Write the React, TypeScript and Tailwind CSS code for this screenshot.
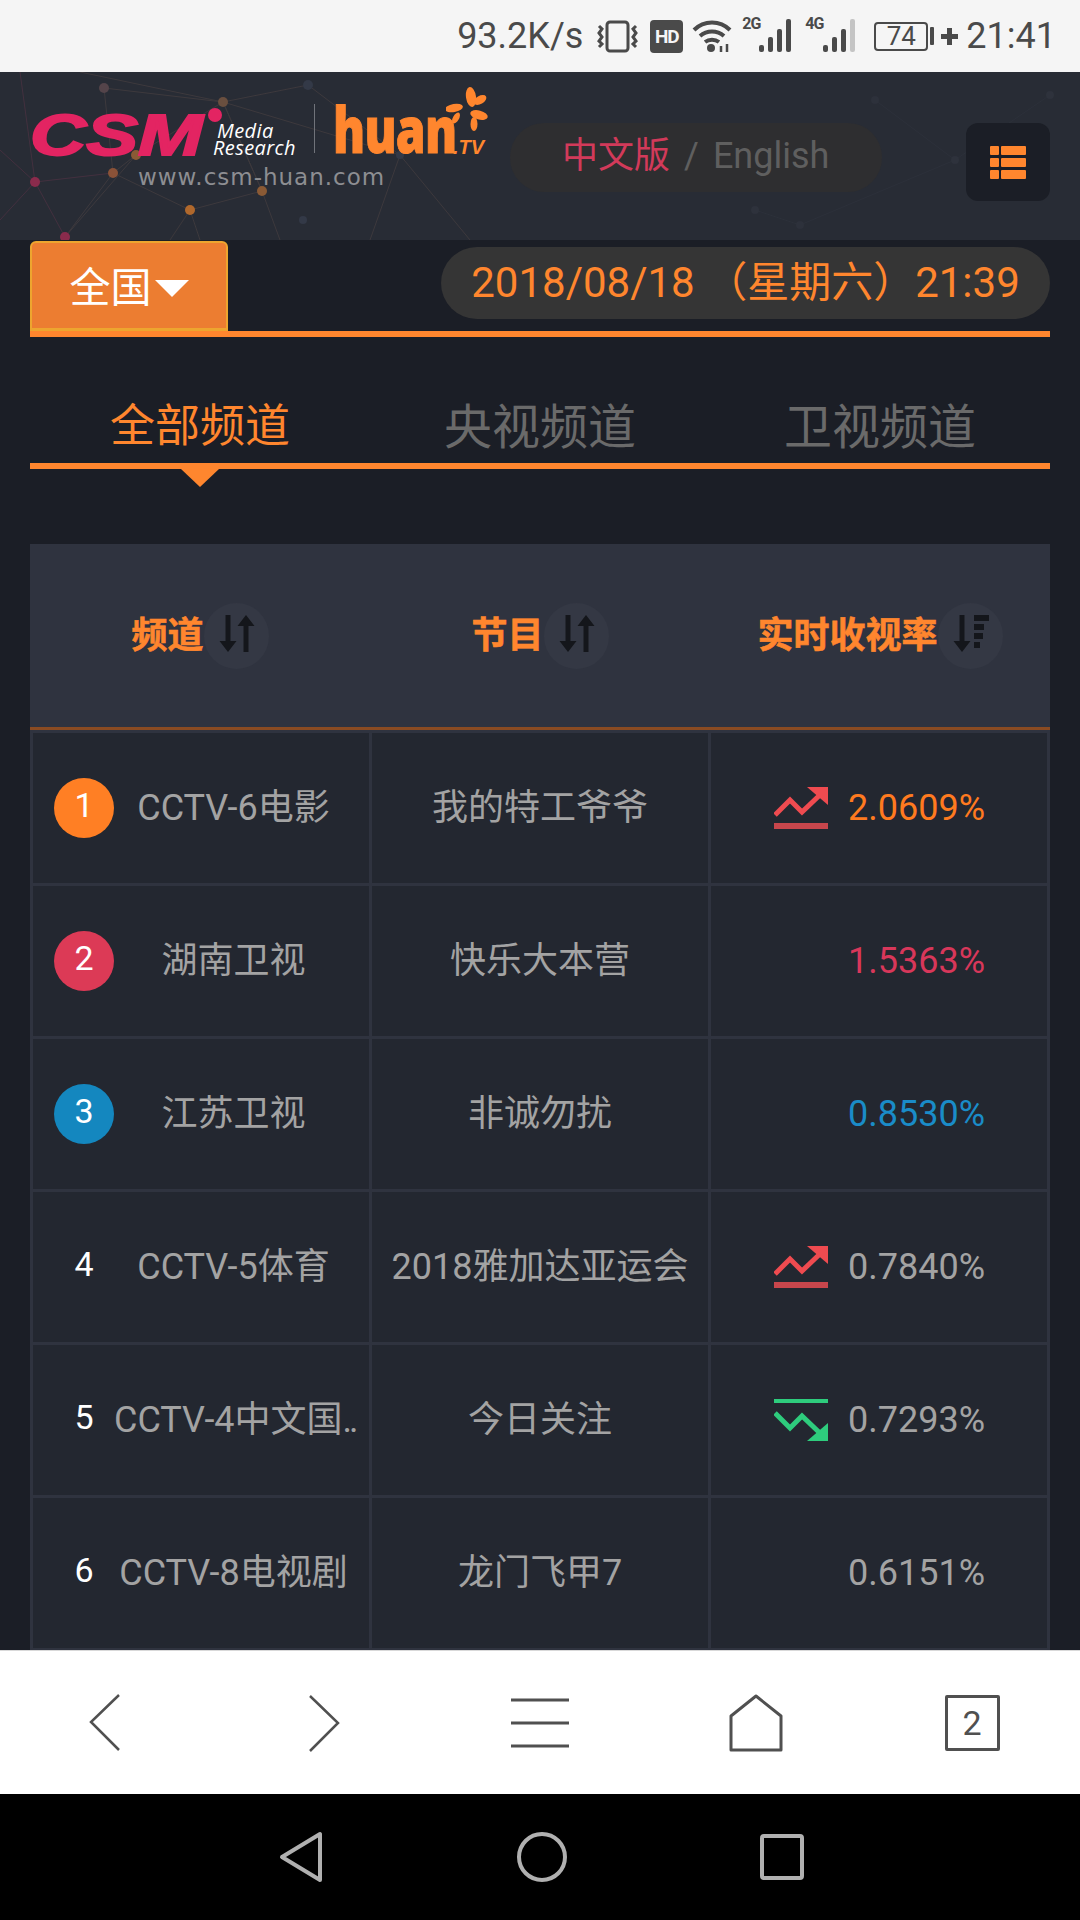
import React from "react";

const base = "[font-family:Roboto,'Noto_Sans_CJK_SC',sans-serif]";

function Trend({ up }: { up: boolean }) {
  const c = up ? "#ef4b50" : "#2ecc7d";
  return (
    <svg width="54" height="42" viewBox="0 0 54 42" className={up ? "" : "-scale-y-100"}>
      <path d="M1 28 L16 13 L28 25 L49 5" fill="none" stroke={c} strokeWidth="5" />
      <path d="M33 0 H54 V18 Z" fill={c} />
      {up ? <rect x="0" y="36" width="54" height="6" fill="#c8464c" /> : <rect x="0" y="38" width="54" height="4" fill={c} />}
    </svg>
  );
}

function Sort({ third }: { third?: boolean }) {
  return (
    <div className="w-[65px] h-[66px] rounded-full bg-[#343844] shrink-0">
      <svg width="65" height="66" viewBox="0 0 65 66">
        <path d="M21.5 12h5v26h6l-8.500 11-8.500-11h6z" fill="#14161b" />
        {third ? (
          <g fill="#14161b">
            <rect x="36" y="12" width="15" height="6" />
            <rect x="36" y="21" width="10" height="6" />
            <rect x="36" y="30" width="9" height="6" />
            <rect x="36" y="39" width="6" height="6" />
          </g>
        ) : (
          <path d="M39.500 49h5V23h6l-8.500-11-8.500 11h6z" fill="#14161b" />
        )}
      </svg>
    </div>
  );
}

type Row = {
  rank: number;
  name: string;
  dots?: boolean;
  show: string;
  rate: string;
  trend?: "up" | "down";
  badge?: string;
  color?: string;
};

const rows: Row[] = [
  { rank: 1, name: "CCTV-6电影", show: "我的特工爷爷", rate: "2.0609%", trend: "up", badge: "bg-[#ff7f24]", color: "text-[#ff7a1f]" },
  { rank: 2, name: "湖南卫视", show: "快乐大本营", rate: "1.5363%", badge: "bg-[#dc3a56]", color: "text-[#d8375a]" },
  { rank: 3, name: "江苏卫视", show: "非诚勿扰", rate: "0.8530%", badge: "bg-[#1487bf]", color: "text-[#1a8cc8]" },
  { rank: 4, name: "CCTV-5体育", show: "2018雅加达亚运会", rate: "0.7840%", trend: "up" },
  { rank: 5, name: "CCTV-4中文国", dots: true, show: "今日关注", rate: "0.7293%", trend: "down" },
  { rank: 6, name: "CCTV-8电视剧", show: "龙门飞甲7", rate: "0.6151%" },
  { rank: 7, name: "", show: "", rate: "" },
];

function Network() {
  const nodes: [number, number, string][] = [
    [104, 88, "#54444a"], [223, 102, "#6a4f3f"], [308, 85, "#333947"], [136, 155, "#8a5a35"],
    [113, 173, "#8a5238"], [35, 182, "#8a2b4c"], [262, 191, "#8a5a35"], [190, 210, "#b0682c"],
    [65, 237, "#8a2b4c"], [400, 155, "#333947"], [303, 220, "#333947"], [755, 210, "#2e323c"],
    [955, 160, "#2e323c"], [1050, 95, "#2e323c"], [875, 100, "#2d313b"], [800, 225, "#2d313b"],
  ];
  const lines = [
    [104, 88, 223, 102], [223, 102, 308, 85], [104, 88, 113, 173], [223, 102, 136, 155], [223, 102, 262, 191],
    [136, 155, 113, 173], [113, 173, 35, 182], [113, 173, 190, 210], [136, 155, 65, 237], [113, 173, 65, 237],
    [190, 210, 262, 191], [262, 191, 223, 102], [190, 210, 200, 240], [190, 210, 170, 240], [262, 191, 280, 240],
    [35, 182, 0, 150], [35, 182, 65, 237], [0, 220, 35, 182], [80, 72, 223, 102], [20, 72, 35, 182],
    [308, 85, 400, 155], [400, 155, 470, 240], [400, 155, 370, 240], [223, 102, 400, 155],
    [875, 100, 955, 160], [955, 160, 1050, 95], [755, 210, 800, 225], [800, 225, 955, 160],
  ];
  return (
    <svg className="absolute left-0 top-[-72px] pointer-events-none" width="1080" height="240" viewBox="0 0 1080 240">
      {lines.map((l, i) => (
        <line key={i} x1={l[0]} y1={l[1]} x2={l[2]} y2={l[3]} stroke={i < 24 ? (l[0] < 60 || l[2] < 40 ? "#43303f" : "#3d393d") : "#2c303a"} strokeWidth="1" />
      ))}
      {nodes.map((n, i) => (
        <circle key={i} cx={n[0]} cy={n[1]} r={i < 9 ? 5 : 4} fill={n[2]} />
      ))}
    </svg>
  );
}

function Logo() {
  return (
    <div className="relative z-10 w-[480px] ml-[30px] shrink-0">
      <div className="flex items-start h-[92px]">
        <div className="w-[183px] h-[60px] relative shrink-0 mt-[39px]">
          <span className="inline-block origin-top-left scale-x-[1.34] [font-family:'Liberation_Sans',sans-serif] italic font-bold text-[58px] leading-[48px] text-[#e32462] [-webkit-text-stroke:2px_#e32462]">CSM</span>
          <span className="absolute left-[178px] top-[-3px] w-[14px] h-[14px] rounded-full bg-[#e32462]" />
        </div>
        <div className="w-[90px] shrink-0 mt-[50px] text-white italic [font-family:'Open_Sans',sans-serif] text-[20px] leading-[17px] tracking-[0.4px]">
          <div className="pl-[4px]">Media</div>
          <div>Research</div>
        </div>
        <div className="w-px h-[49px] bg-[#70737a] ml-[11px] mr-[18px] shrink-0 mt-[32px]" />
        <div className="relative shrink-0 mt-[33px] w-[113px] h-[48px]">
          <span className="inline-block origin-top-left scale-x-[0.75] [font-family:'Open_Sans',sans-serif] font-extrabold text-[64px] leading-[48px] tracking-[-1px] text-[#ff862e] [-webkit-text-stroke:1px_#ff862e]">huan</span>
          <svg className="absolute left-[113px] top-[-18px]" width="44" height="44" viewBox="0 0 44 44">
            <g fill="#ff862e">
              <ellipse cx="25" cy="10" rx="5" ry="10" transform="rotate(-8 25 10)" />
              <ellipse cx="34" cy="13" rx="7" ry="4" transform="rotate(-30 34 13)" />
              <ellipse cx="8" cy="21" rx="9" ry="4" transform="rotate(-10 8 21)" />
              <ellipse cx="10" cy="31" rx="3" ry="6" transform="rotate(30 10 31)" />
              <ellipse cx="33" cy="28" rx="9" ry="4.5" transform="rotate(15 33 28)" />
              <ellipse cx="28" cy="37" rx="3.5" ry="7" />
            </g>
          </svg>
          <span className="absolute left-[120px] top-[32px] italic font-bold text-[#ff862e] [font-family:'Liberation_Sans',sans-serif] text-[20px] leading-none">.TV</span>
        </div>
      </div>
      <div className="pl-[108px] mt-[1px] [font-family:'DejaVu_Sans',sans-serif] text-[23px] leading-[24px] text-[#8d8e92] tracking-[1px] whitespace-nowrap">www.csm-huan.com</div>
    </div>
  );
}

function StatusBar() {
  const bars = (last: string) => (
    <svg width="36" height="33" viewBox="0 0 36 33" className="absolute right-0 top-0">
      <rect x="1" y="26" width="5" height="7" rx="2" fill="#4a4a4a" />
      <rect x="10" y="18" width="5" height="15" rx="2" fill="#4a4a4a" />
      <rect x="19" y="10" width="5" height="23" rx="2" fill="#4a4a4a" />
      <rect x="28" y="0" width="5" height="33" rx="2" fill={last} />
    </svg>
  );
  return (
    <div className="h-[72px] bg-[#f5f5f5] flex items-center justify-end pr-[24px] text-[#4a4a4a] shrink-0">
      <span className="text-[36px] leading-none">93.2K/s</span>
      <svg className="ml-[13px]" width="43" height="33" viewBox="0 0 43 33" fill="none" stroke="#4a4a4a">
        <rect x="11" y="2" width="21" height="29" rx="3" strokeWidth="3" />
        <path d="M3 6l3 3-3 4 3 4-3 4 3 3-3 3M40 6l-3 3 3 4-3 4 3 4-3 3 3 3" strokeWidth="3" />
      </svg>
      <span className="ml-[11px] w-[33px] h-[33px] rounded-[4px] bg-[#4a4a4a] text-[#f5f5f5] text-[19px] tracking-[-1px] font-bold flex items-center justify-center leading-none">HD</span>
      <svg className="ml-[9px]" width="40" height="34" viewBox="0 0 40 34" fill="none" stroke="#4a4a4a" strokeWidth="4">
        <path d="M2 11c10-10 26-10 36 0M8 17c7-6 17-6 24 0M13 23c4-3 10-3 14 0" />
        <circle cx="19" cy="29" r="4" fill="#4a4a4a" stroke="none" />
        <path d="M29 27v6M35 25v8" strokeWidth="2.5" />
      </svg>
      <span className="relative ml-[10px] w-[52px] h-[34px] block">
        <span className="absolute left-0 top-[-3px] text-[16px] font-bold leading-none tracking-[-1px]">2G</span>
        {bars("#4a4a4a")}
      </span>
      <span className="relative ml-[11px] w-[53px] h-[34px] block">
        <span className="absolute left-0 top-[-3px] text-[16px] font-bold leading-none tracking-[-1px]">4G</span>
        {bars("#c4c4c4")}
      </span>
      <span className="ml-[16px] w-[54px] h-[29px] border-2 border-[#4a4a4a] rounded-[4px] flex items-center justify-center text-[26px] leading-none">74</span>
      <span className="ml-[2px] w-[4px] h-[18px] bg-[#4a4a4a] rounded-[1px]" />
      <svg className="ml-[7px]" width="17" height="17" viewBox="0 0 17 17"><path d="M6 0h5v6h6v5h-6v6H6v-6H0V6h6z" fill="#4a4a4a" /></svg>
      <span className="ml-[8px] text-[36px] leading-none">21:41</span>
    </div>
  );
}

function Header() {
  return (
    <div className="h-[168px] bg-[#282c35] relative overflow-hidden flex items-start shrink-0">
      <Network />
      <Logo />
      <div className="relative z-10 mt-[51px] w-[372px] h-[69px] rounded-[34px] bg-[#2e2e30] flex items-center pl-[52px] pb-[3px] text-[36px] leading-none">
        <span className="text-[#d23a5a]">中文版</span>
        <span className="text-[#5f5f5f] mx-[14px]">/</span>
        <span className="text-[#5f5f5f]">English</span>
      </div>
      <div className="relative z-10 mt-[51px] ml-[84px] w-[84px] h-[78px] rounded-[12px] bg-[#1b1e26] flex items-center justify-center">
        <svg width="36" height="33" viewBox="0 0 36 33" fill="#ff862e">
          <rect x="0" y="0" width="9" height="9" rx="1" /><rect x="11" y="0" width="25" height="9" rx="1" />
          <rect x="0" y="12" width="9" height="9" rx="1" /><rect x="11" y="12" width="25" height="9" rx="1" />
          <rect x="0" y="24" width="9" height="9" rx="1" /><rect x="11" y="24" width="25" height="9" rx="1" />
        </svg>
      </div>
    </div>
  );
}

function Table() {
  return (
    <div className="mx-[30px] mt-[57px] bg-[#2f333f]">
      <div className="h-[186px] grid grid-cols-3 border-b-[3px] border-[#8a4b22] text-[#ff862e] text-[36px] font-bold leading-none">
        <div className="flex items-center justify-center"><span className="[-webkit-text-stroke:0.6px_#ff862e]">频道</span><Sort /></div>
        <div className="flex items-center justify-center"><span className="[-webkit-text-stroke:0.6px_#ff862e]">节目</span><Sort /></div>
        <div className="flex items-center justify-center"><span className="[-webkit-text-stroke:0.6px_#ff862e]">实时收视率</span><Sort third /></div>
      </div>
      <div className="grid grid-cols-3 gap-[3px] p-[3px] text-[#a3a3a3] text-[36px] leading-none">
        {rows.map((r) => (
          <React.Fragment key={r.rank}>
            <div className="h-[150px] bg-[#232730] flex items-center pl-[21px]">
              {r.rank < 7 && (
                <span className={`w-[60px] h-[60px] rounded-full shrink-0 flex items-center justify-center text-white text-[34px] pb-[6px] ${r.badge ?? ""}`}>{r.rank}</span>
              )}
              <span className="flex-1 text-center whitespace-nowrap pr-[16px]">
                {r.name}
                {r.dots && <span className="tracking-[-3px]">..</span>}
              </span>
            </div>
            <div className="h-[150px] bg-[#232730] flex items-center justify-center whitespace-nowrap">{r.show}</div>
            <div className={`h-[150px] bg-[#232730] flex items-center pl-[63px] ${r.color ?? ""}`}>
              <span className="w-[54px] h-[42px] shrink-0">{r.trend && <Trend up={r.trend === "up"} />}</span>
              <span className="ml-[20px]">{r.rate}</span>
            </div>
          </React.Fragment>
        ))}
      </div>
    </div>
  );
}

export default function App() {
  return (
    <div className={`w-[1080px] h-[1920px] overflow-hidden flex flex-col bg-[#1b1e26] ${base}`}>
      <StatusBar />
      <Header />
      <div className="flex-1 min-h-0 overflow-hidden">
        <div className="mx-[30px] h-[97px] flex items-start justify-between border-b-[6px] border-[#ff862e]">
          <div className="mt-[1px] w-[198px] h-[90px] bg-[#ec7d31] border-2 border-b-[3px] border-[#eda52f] rounded-t-[6px] flex items-center justify-center gap-[3px] text-white text-[41px] leading-none pt-[6px]">
            <span>全国</span>
            <span className="w-0 h-0 border-x-[17px] border-x-transparent border-t-[17px] border-t-white" />
          </div>
          <div className="mt-[7px] w-[609px] h-[72px] rounded-[36px] bg-[#353535] text-[#ff862e] text-[42px] leading-none flex items-center justify-center whitespace-nowrap">
            2018/08/18 （星期六）21:39
          </div>
        </div>
        <div className="mx-[30px] h-[132px] grid grid-cols-3 border-b-[6px] border-[#ff862e] text-[48px] leading-none text-[#6a6a6a] items-center pt-[56px]">
          <span className="text-center text-[45px] text-[#ff862e] pb-[3px]">全部频道</span>
          <span className="text-center">央视频道</span>
          <span className="text-center">卫视频道</span>
        </div>
        <div className="mx-[30px] grid grid-cols-3">
          <div className="flex justify-center">
            <span className="w-0 h-0 border-x-[19px] border-x-transparent border-t-[18px] border-t-[#ff862e]" />
          </div>
        </div>
        <Table />
      </div>
      <div className="h-[144px] shrink-0 bg-white border-t border-[#d9d9d9] grid grid-cols-5 items-center justify-items-center text-[#505050]">
        <svg className="-ml-[6px]" width="34" height="58" viewBox="0 0 34 58" fill="none" stroke="#505050" strokeWidth="2.5"><path d="M31 1 L3 28 L31 56" /></svg>
        <svg width="34" height="58" viewBox="0 0 34 58" fill="none" stroke="#505050" strokeWidth="2.5"><path d="M3 2 L31 29 L3 57" /></svg>
        <svg width="58" height="50" viewBox="0 0 58 50" fill="none" stroke="#505050" strokeWidth="3"><path d="M0 2H58M0 25H58M0 48H58" /></svg>
        <svg width="56" height="58" viewBox="0 0 56 58" fill="none" stroke="#505050" strokeWidth="3"><path d="M28 2 L3 22 V56 H53 V22 Z" strokeLinejoin="round" /></svg>
        <span className="w-[55px] h-[56px] border-[3px] border-[#505050] rounded-[2px] flex items-center justify-center text-[34px] leading-none">2</span>
      </div>
      <div className="h-[126px] shrink-0 bg-black flex items-center justify-center">
        <svg className="ml-[2px]" width="44" height="52" viewBox="0 0 44 52" fill="none" stroke="#b0b0b0" strokeWidth="4" strokeLinejoin="round"><path d="M41 3 V49 L3 26 Z" /></svg>
        <svg className="ml-[193px]" width="52" height="52" viewBox="0 0 52 52" fill="none" stroke="#b0b0b0" strokeWidth="4"><circle cx="26" cy="26" r="23" /></svg>
        <svg className="ml-[192px]" width="44" height="46" viewBox="0 0 44 46" fill="none" stroke="#b0b0b0" strokeWidth="4"><rect x="2" y="2" width="40" height="42" rx="2" /></svg>
      </div>
    </div>
  );
}
